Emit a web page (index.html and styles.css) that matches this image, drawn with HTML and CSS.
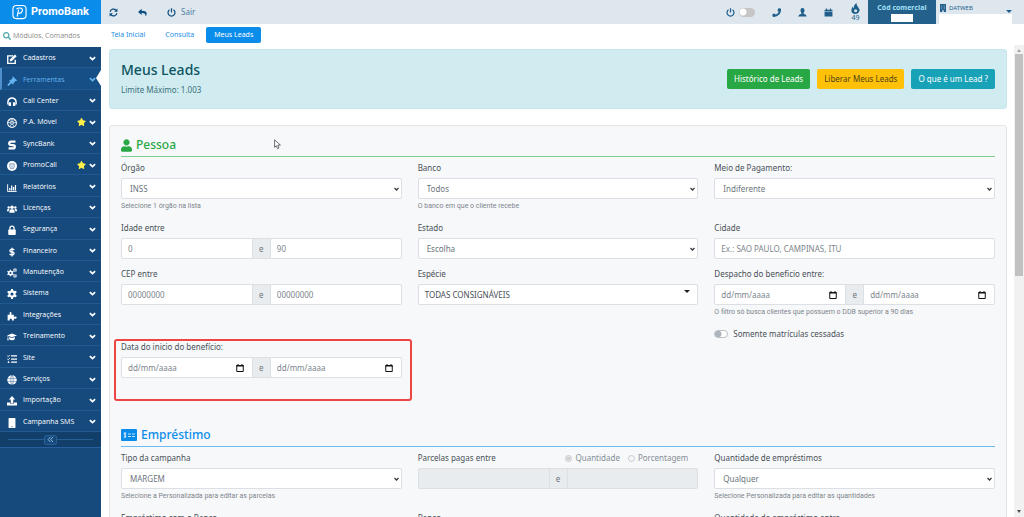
FILE: index.html
```html
<!DOCTYPE html>
<html lang="pt-BR">
<head>
<meta charset="utf-8">
<title>PromoBank - Meus Leads</title>
<link rel="stylesheet" href="styles.css">
</head>
<body>
<svg class="defs" aria-hidden="true">
  <symbol id="user" viewBox="0 0 448 512"><path d="M224 256c70.7 0 128-57.3 128-128S294.7 0 224 0 96 57.3 96 128s57.3 128 128 128zm89.6 32h-16.7c-22.2 10.2-46.9 16-72.9 16s-50.6-5.8-72.9-16h-16.7C60.2 288 0 348.2 0 422.4V464c0 26.500 21.500 48 48 48h352c26.500 0 48-21.500 48-48v-41.600c0-74.200-60.200-134.400-134.400-134.400z"/></symbol>
  <symbol id="search" viewBox="0 0 512 512"><path d="M505 442.700L405.300 343c-4.500-4.500-10.600-7-17-7H372c27.600-35.300 44-79.700 44-128C416 93.100 322.900 0 208 0S0 93.100 0 208s93.100 208 208 208c48.300 0 92.700-16.400 128-44v16.300c0 6.400 2.500 12.500 7 17l99.700 99.700c9.400 9.400 24.600 9.400 33.900 0l28.300-28.300c9.400-9.400 9.400-24.600.1-34zM208 336c-70.700 0-128-57.200-128-128 0-70.700 57.200-128 128-128 70.700 0 128 57.200 128 128 0 70.700-57.200 128-128 128z"/></symbol>
  <symbol id="star" viewBox="0 0 576 512"><path d="M259.300 17.800L194 150.200 47.900 171.500c-26.200 3.800-36.700 36.100-17.700 54.600l105.700 103-25 145.500c-4.500 26.300 23.200 46 46.400 33.700L288 439.600l130.700 68.700c23.200 12.200 50.900-7.400 46.400-33.700l-25-145.500 105.700-103c19-18.500 8.500-50.800-17.700-54.600L382 150.200 316.700 17.800c-11.700-23.600-45.600-23.900-57.400 0z"/></symbol>
  <symbol id="chevron" viewBox="0 0 16 16"><path d="M2 5l6 5.500L14 5" fill="none" stroke="currentColor" stroke-width="4"/></symbol>
  <symbol id="edit" viewBox="0 0 16 16"><path d="M10 3H1.200v12h12V9" fill="none" stroke="currentColor" stroke-width="2.200"/><path d="M5 8.500L12.800.7l2.700 2.700L7.700 11.200 4.600 12z"/></symbol>
  <symbol id="gavel" viewBox="0 0 16 16"><path d="M8.500 1l6.500 6.500-1.500 1.500-1-.4-3 3 .4 1L8.400 14 2.500 8l1.400-1.500 1 .4 3-3-.4-1.300z" transform="translate(1 -.5)"/><path d="M7 9.500L1.500 15" stroke="currentColor" stroke-width="3"/></symbol>
  <symbol id="headset" viewBox="0 0 16 16"><path d="M1.500 12V8a6.500 6.500 0 0 1 13 0v4" fill="none" stroke="currentColor" stroke-width="2.400"/><path d="M3.500 8.500h3v6h-2L2 13zM12.500 8.500h-3v6h2L14 13z"/></symbol>
  <symbol id="ball" viewBox="0 0 16 16"><circle cx="8" cy="8" r="7" fill="none" stroke="currentColor" stroke-width="1.700"/><circle cx="8" cy="8" r="2.200" fill="none" stroke="currentColor" stroke-width="1.300"/><path d="M8 1v5M15 7l-5 1M12 14L9 10M4 14l3-4M1 7l5 1M3.500 3L7 6.500M12.500 3L9 6.500" stroke="currentColor" stroke-width="1.200"/></symbol>
  <symbol id="sync" viewBox="0 0 16 16"><path d="M13.500 2.500H6.500Q3.500 2.500 3.500 5.200T6.500 8h3Q12.500 8 12.500 10.800T9.500 13.500H2.500" fill="none" stroke="currentColor" stroke-width="3.600"/></symbol>
  <symbol id="face" viewBox="0 0 16 16"><circle cx="8" cy="8" r="8"/><path d="M4.500 4.500h7v4.500a3.500 3.500 0 0 1-7 0zM6 6.500h1.300M8.800 6.500h1.300M6.500 9q1.500 1.800 3 0" fill="none" stroke="#164a7d" stroke-width=".8"/></symbol>
  <symbol id="chart" viewBox="0 0 16 16"><path d="M1 2v11.500h14.500" fill="none" stroke="currentColor" stroke-width="1.500"/><path d="M4.500 12V8M7.500 12V4M10.500 12V6.500M13.500 12V3" stroke="currentColor" stroke-width="2"/></symbol>
  <symbol id="group" viewBox="0 0 16 16"><circle cx="8" cy="5.200" r="2.800"/><circle cx="2.700" cy="5.500" r="1.900"/><circle cx="13.300" cy="5.500" r="1.900"/><path d="M3.800 14v-2.500q0-3 3-3h2.400q3 0 3 3V14zM0 11.500V9.800Q0 8 2 8h1.800Q2.900 9.500 2.900 11.500zM16 11.500V9.800Q16 8 14 8h-1.800q.9 1.500.9 3.500z"/></symbol>
  <symbol id="lock" viewBox="0 0 16 16"><rect x="2" y="7" width="12" height="9" rx="1.200"/><path d="M4.700 8V5a3.300 3.300 0 0 1 6.600 0v3" fill="none" stroke="currentColor" stroke-width="2"/></symbol>
  <symbol id="dollar" viewBox="0 0 16 16"><path d="M11.500 5Q11 3.500 8 3.500T4.700 5.700 8 8t3.300 2.400T8 12.600 4.300 11M8 1v14" fill="none" stroke="currentColor" stroke-width="2.100"/></symbol>
  <symbol id="gear" viewBox="0 0 16 16"><circle cx="8" cy="8" r="4.200" fill="none" stroke="currentColor" stroke-width="3.400"/><path d="M8 0v3M8 13v3M1 4l2.700 1.500M12.300 10.500L15 12M1 12l2.700-1.500M12.300 5.500L15 4" stroke="currentColor" stroke-width="3.200"/></symbol>
  <symbol id="gears" viewBox="0 0 16 16"><use href="#gear" x="0" y="2.500" width="11" height="11"/><use href="#gear" x="9.500" y="0" width="6.500" height="7"/><use href="#gear" x="9.500" y="9" width="6.500" height="7"/></symbol>
  <symbol id="puzzle" viewBox="0 0 16 16"><path d="M1 6h3.500Q3 2 5.500 1.500T7 6h4v3.500q4-1.500 4.500 1T11 12v3H8q0-3-2-3t-2 3H1z"/></symbol>
  <symbol id="grad" viewBox="0 0 16 16"><path d="M8 2.500l8 3-8 3-8-3z"/><path d="M3.500 8L8 9.700 12.500 8v3.500Q8 14.500 3.500 11.500zM1 6h1v3.500l.8 3.500H.3L1 9.500z"/></symbol>
  <symbol id="tasks" viewBox="0 0 16 16"><path d="M6.500 3H16M6.500 8H16M6.500 13H16" stroke="currentColor" stroke-width="2"/><path d="M.5 3l1.500 1.300L4.500 1.500M.5 8L2 9.300 4.500 6.500" fill="none" stroke="currentColor" stroke-width="1.400"/><circle cx="2.500" cy="13" r="1.400"/></symbol>
  <symbol id="globe" viewBox="0 0 16 16"><circle cx="8" cy="8" r="7.600"/><path d="M0 5.500h16M0 10.500h16M8 0v16M8 0q-6 8 0 16M8 0q6 8 0 16" fill="none" stroke="#164a7d" stroke-width=".6"/></symbol>
  <symbol id="upload" viewBox="0 0 16 16"><path d="M8 0l5 5.500h-3V11H6V5.500H3z"/><path d="M0 10.500h4.800V12h6.400v-1.500H16V15H0z"/></symbol>
  <symbol id="mobile" viewBox="0 0 16 16"><path d="M3.500 0h9q1 0 1 1v14q0 1-1 1h-9q-1 0-1-1V1q0-1 1-1z"/><path d="M7 14h2" stroke="#164a7d" stroke-width="1.200"/></symbol>
  <symbol id="refresh" viewBox="0 0 16 16"><path d="M2 7a6 6 0 0 1 10.500-3M14 9a6 6 0 0 1-10.500 3" fill="none" stroke="currentColor" stroke-width="2.200"/><path d="M15 .8v6H9zM1 15.200v-6h6z"/></symbol>
  <symbol id="reply" viewBox="0 0 16 16"><path d="M6.500 1.500V5Q16 5 15.500 10.500q-.2 2.500-2.500 4.200Q14.500 8.800 6.500 9v3.500L0 7z"/></symbol>
  <symbol id="power" viewBox="0 0 16 16"><path d="M4.500 3a6.200 6.200 0 1 0 7 0M8 .5V8" fill="none" stroke="currentColor" stroke-width="2.200"/></symbol>
  <symbol id="phone" viewBox="0 0 16 16"><path d="M12.200.3l3 .7q.8.200.8 1A13 13 0 0 1 2.500 16q-1 0-1.200-.8L.5 12.300q-.1-.7.500-1l3.200-1.400q.6-.2 1 .3L6.600 12A10 10 0 0 0 12 6.600L10.200 5.200q-.5-.4-.3-1L11.200.8q.3-.6 1-.5z"/></symbol>
  <symbol id="person" viewBox="0 0 16 16"><path d="M8 0q3.600 0 3.600 4 0 3-1.700 4.700v1.500q5.300 1.300 5.600 4.800H.5Q.8 11.500 6.100 10.200V8.700Q4.400 7 4.400 4 4.400 0 8 0z"/></symbol>
  <symbol id="calendar" viewBox="0 0 16 16"><path d="M1 3h2.500V1h2v2h5V1h2v2H15v2.300H1zM1 6.300h14V15H1z"/></symbol>
  <symbol id="flame" viewBox="0 0 16 16"><path d="M9.500 0Q9 3 12 6.200T13 13q-1.500 3-5 3-6 0-6-5.500Q2 7.500 4.200 5q.3 2.200 1.500 2.700Q5 2.500 9.500 0z"/><circle cx="8.200" cy="11.300" r="2.200" fill="#dee7ee"/></symbol>
  <symbol id="building" viewBox="0 0 16 16"><path d="M2 0h12v16H9.500v-3.500h-3V16H2z"/><path d="M4.500 3.500h2M9.500 3.500h2M4.500 6.500h2M9.500 6.500h2M4.500 9.500h2M9.500 9.500h2" stroke="#dee7ee" stroke-width="1.200"/></symbol>
  <symbol id="date" viewBox="0 0 16 16"><path d="M1.500 3h13v12h-13z" fill="none" stroke="currentColor" stroke-width="2"/><path d="M1 2h14v3H1zM3 0h2v3H3zM11 0h2v3h-2z"/></symbol>
</svg>

<div class="app">
  <aside class="sidebar">
    <a class="brand" href="#"><svg class="brand-mark" viewBox="0 0 16 16"><rect x="1" y="1" width="14" height="14" rx="3.500"/><path d="M5.500 13L7 5.500M4.800 5Q6 3.500 8.500 3.700 11.500 4 11 6.800 10.300 9.700 7 9.500"/></svg>PromoBank</a>
    <label class="finder"><svg><use href="#search"/></svg><input type="text" placeholder="Módulos, Comandos" aria-label="Módulos, Comandos"></label>
    <nav class="menu">
      <a href="#"><svg class="ico"><use href="#edit"/></svg><span>Cadastros</span><svg class="chev"><use href="#chevron"/></svg></a>
      <a href="#" class="current"><svg class="ico"><use href="#gavel"/></svg><span>Ferramentas</span><svg class="chev"><use href="#chevron"/></svg></a>
      <a href="#"><svg class="ico"><use href="#headset"/></svg><span>Call Center</span><svg class="chev"><use href="#chevron"/></svg></a>
      <a href="#"><svg class="ico"><use href="#ball"/></svg><span>P.A. Móvel</span><svg class="star"><use href="#star"/></svg><svg class="chev"><use href="#chevron"/></svg></a>
      <a href="#"><svg class="ico"><use href="#sync"/></svg><span>SyncBank</span><svg class="chev"><use href="#chevron"/></svg></a>
      <a href="#"><svg class="ico"><use href="#face"/></svg><span>PromoCall</span><svg class="star"><use href="#star"/></svg><svg class="chev"><use href="#chevron"/></svg></a>
      <a href="#"><svg class="ico"><use href="#chart"/></svg><span>Relatórios</span><svg class="chev"><use href="#chevron"/></svg></a>
      <a href="#"><svg class="ico"><use href="#group"/></svg><span>Licenças</span><svg class="chev"><use href="#chevron"/></svg></a>
      <a href="#"><svg class="ico"><use href="#lock"/></svg><span>Segurança</span><svg class="chev"><use href="#chevron"/></svg></a>
      <a href="#"><svg class="ico"><use href="#dollar"/></svg><span>Financeiro</span><svg class="chev"><use href="#chevron"/></svg></a>
      <a href="#"><svg class="ico"><use href="#gears"/></svg><span>Manutenção</span><svg class="chev"><use href="#chevron"/></svg></a>
      <a href="#"><svg class="ico"><use href="#gear"/></svg><span>Sistema</span><svg class="chev"><use href="#chevron"/></svg></a>
      <a href="#"><svg class="ico"><use href="#puzzle"/></svg><span>Integrações</span><svg class="chev"><use href="#chevron"/></svg></a>
      <a href="#"><svg class="ico"><use href="#grad"/></svg><span>Treinamento</span><svg class="chev"><use href="#chevron"/></svg></a>
      <a href="#"><svg class="ico"><use href="#tasks"/></svg><span>Site</span><svg class="chev"><use href="#chevron"/></svg></a>
      <a href="#"><svg class="ico"><use href="#globe"/></svg><span>Serviços</span><svg class="chev"><use href="#chevron"/></svg></a>
      <a href="#"><svg class="ico"><use href="#upload"/></svg><span>Importação</span><svg class="chev"><use href="#chevron"/></svg></a>
      <a href="#"><svg class="ico"><use href="#mobile"/></svg><span>Campanha SMS</span><svg class="chev"><use href="#chevron"/></svg></a>
    </nav>
    <div class="collapse"><button type="button" aria-label="Recolher menu"><svg viewBox="0 0 16 16"><path d="M8 2L2.500 8 8 14M14 2L8.500 8l5.500 6"/></svg></button></div>
  </aside>

  <div class="main">
    <header class="topbar">
      <div class="actions">
        <button type="button" aria-label="Atualizar"><svg><use href="#refresh"/></svg></button>
        <button type="button" aria-label="Voltar"><svg><use href="#reply"/></svg></button>
        <button type="button"><svg><use href="#power"/></svg><span>Sair</span></button>
      </div>
      <div class="tools">
        <label class="presence"><svg><use href="#power"/></svg><input class="toggle" type="checkbox" aria-label="Disponível"></label>
        <button type="button" aria-label="Telefone"><svg><use href="#phone"/></svg></button>
        <button type="button" aria-label="Perfil"><svg><use href="#person"/></svg></button>
        <button type="button" aria-label="Agenda"><svg><use href="#calendar"/></svg></button>
        <button type="button" class="leads"><svg><use href="#flame"/></svg>49</button>
      </div>
      <div class="code">Cód comercial<span></span></div>
      <button type="button" class="account"><span class="company"><svg><use href="#building"/></svg>DATWEB</span><span class="mask"></span><span class="caret"></span></button>
    </header>
    <nav class="tabs">
      <a href="#">Tela Inicial</a><a href="#">Consulta</a><a href="#" class="active">Meus Leads</a>
    </nav>

    <div class="viewport">
      <main class="page">
        <section class="banner">
          <div><h1>Meus Leads</h1><p>Limite Máximo: 1.003</p></div>
          <div class="buttons">
            <button type="button" class="green">Histórico de Leads</button>
            <button type="button" class="yellow">Liberar Meus Leads</button>
            <button type="button" class="teal">O que é um Lead ?</button>
          </div>
        </section>

        <form class="card">
          <h2 class="person"><svg><use href="#user"/></svg>Pessoa</h2>
          <div class="row">
            <div class="field"><label for="orgao">Órgão</label><select id="orgao"><option>INSS</option></select><small>Selecione 1 órgão na lista</small></div>
            <div class="field"><label for="banco">Banco</label><select id="banco"><option>Todos</option></select><small>O banco em que o cliente recebe</small></div>
            <div class="field"><label for="meio">Meio de Pagamento:</label><select id="meio"><option>Indiferente</option></select></div>
          </div>
          <div class="row">
            <div class="field"><label for="idade">Idade entre</label><div class="range"><input id="idade" type="text" placeholder="0"><span>e</span><input type="text" placeholder="90" aria-label="Idade final"></div></div>
            <div class="field"><label for="estado">Estado</label><select id="estado"><option>Escolha</option></select></div>
            <div class="field"><label for="cidade">Cidade</label><input id="cidade" type="text" placeholder="Ex.: SAO PAULO, CAMPINAS, ITU"></div>
          </div>
          <div class="row tight">
            <div class="field"><label for="cep">CEP entre</label><div class="range"><input id="cep" type="text" placeholder="00000000"><span>e</span><input type="text" placeholder="00000000" aria-label="CEP final"></div></div>
            <div class="field"><label for="especie">Espécie</label><button id="especie" type="button" class="picker">TODAS CONSIGNÁVEIS<span class="caret"></span></button></div>
            <div class="field"><label for="ddb">Despacho do beneficio entre:</label><div class="range"><div class="date"><input id="ddb" type="text" placeholder="dd/mm/aaaa"><svg><use href="#date"/></svg></div><span>e</span><div class="date"><input type="text" placeholder="dd/mm/aaaa" aria-label="Despacho final"><svg><use href="#date"/></svg></div></div><small>O filtro só busca clientes que possuem o DDB superior a 90 dias</small>
              <label class="switch"><input class="toggle" type="checkbox">Somente matrículas cessadas</label></div>
          </div>
          <div class="row">
            <div class="field marked"><label for="dib">Data do inicio do benefício:</label><div class="range"><div class="date"><input id="dib" type="text" placeholder="dd/mm/aaaa"><svg><use href="#date"/></svg></div><span>e</span><div class="date"><input type="text" placeholder="dd/mm/aaaa" aria-label="Data final"><svg><use href="#date"/></svg></div></div></div>
          </div>

          <h2 class="loan"><svg viewBox="0 0 32 24"><rect width="32" height="24" rx="2" fill="currentColor"/><path d="M10.500 9Q7 7 6 9t2 3 1.500 3.500-4 .5M8 6v12M14 10h6M22 10h6M14 15h6M22 15h6" fill="none" stroke="#fff" stroke-width="1.500"/></svg>Empréstimo</h2>
          <div class="row">
            <div class="field"><label for="tipo">Tipo da campanha</label><select id="tipo"><option>MARGEM</option></select><small>Selecione a Personalizada para editar as parcelas</small></div>
            <div class="field"><div class="label-line"><label for="parc">Parcelas pagas entre</label><div class="radios"><label><input type="radio" name="modo" checked disabled>Quantidade</label><label><input type="radio" name="modo" disabled>Porcentagem</label></div></div><div class="range off"><input id="parc" type="text" disabled><span>e</span><input type="text" disabled aria-label="Parcelas final"></div></div>
            <div class="field"><label for="qtd">Quantidade de empréstimos</label><select id="qtd"><option>Qualquer</option></select><small>Selecione Personalizada para editar as quantidades</small></div>
          </div>
          <div class="row">
            <div class="field"><label for="com">Empréstimo com o Banco</label><select id="com"><option>Qualquer</option></select></div>
            <div class="field"><label for="bancos">Banco</label><select id="bancos"><option>Todos</option></select></div>
            <div class="field"><label for="entre">Quantidade de empréstimo entre</label><input id="entre" type="text"></div>
          </div>
        </form>
      </main>
      <div class="scrollbar" aria-hidden="true"><i class="up"></i><b></b><i class="down"></i></div>
    </div>
  </div>
</div>
<svg class="pointer" viewBox="0 0 12 18" aria-hidden="true"><path d="M1 1v13l3-3 2 5 2.500-1-2-5H11z" fill="#fff" stroke="#333" stroke-width="1.200"/></svg>
</body>
</html>
```
FILE: styles.css
```css
* { box-sizing: border-box; }
body { margin: 0; font: 8px/12px "Noto Sans", "Open Sans", sans-serif; color: #495057; background: #fff; }
button, input, select { font: inherit; color: inherit; }
button { border: 0; padding: 0; background: none; }
a { text-decoration: none; }
svg { fill: currentColor; flex: none; }
.defs { position: absolute; width: 0; height: 0; }
.app { display: flex; height: 100vh; overflow: hidden; }

.sidebar { width: 101px; flex: none; background: #164a7d; font-family: "Open Sans", sans-serif; }
.brand { display: flex; align-items: center; gap: 4px; height: 24px; padding-left: 12px; background: #0a8ceb; color: #fff; font: bold 11px/24px Roboto, sans-serif; }
.brand-mark { width: 15px; height: 16px; fill: none; stroke: #fff; stroke-width: 1.2; }
.finder { display: flex; align-items: center; gap: 2px; height: 23px; padding-left: 3px; background: #fff; color: #4ba6a8; }
.finder svg { width: 8px; height: 8px; }
.finder input { flex: 1; min-width: 0; border: 0; padding: 0; outline: 0; font-size: 7px; }
.finder input::placeholder { color: #8a8a8a; opacity: 1; }
.menu { display: flex; flex-direction: column; height: 385px; }
.menu a { flex: 1; display: flex; align-items: center; padding: 2px 5px 0 7px; border-bottom: 1px solid #205a91; color: #fff; font-size: 7px; position: relative; }
.menu span { flex: 1; white-space: nowrap; }
.menu .ico { width: 10px; height: 10px; margin-right: 6px; margin-top: 2px; }
.menu .chev { width: 7px; height: 7px; }
.menu .star { width: 9px; height: 8px; margin-right: 3px; color: #fff04a; }
.menu .current { color: #65b3ee; background: #164f86; border-left: 2px solid #4f8fcb; padding-left: 5px; }
.menu .current::after { content: ""; position: absolute; right: 0; top: 2px; border: 8px solid transparent; border-right: 5px solid #fff; border-left: 0; }
.collapse { height: 16px; display: flex; align-items: center; justify-content: center; background: linear-gradient(#265f95, #265f95) center / 85px 1px no-repeat #123f69; border-bottom: 1px solid #2660a0; }
.collapse button { width: 13px; height: 10px; display: grid; place-items: center; background: #164a7d; border: 1px solid #265f95; border-radius: 2px; color: #9fc4e4; }
.collapse svg { width: 7px; height: 7px; fill: none; stroke: currentColor; stroke-width: 2; }

.main { flex: 1; min-width: 0; display: flex; flex-direction: column; }
.topbar { display: flex; height: 24px; flex: none; background: #dee7ee; color: #205f8c; }
.topbar svg { width: 9px; height: 9px; }
.actions, .tools { display: flex; align-items: center; }
.actions { flex: 1; gap: 20px; padding-left: 8px; color: #0e4d80; }
.actions button { display: flex; align-items: center; gap: 5px; color: #0e4d80; }
.actions span { color: #4f7d9f; }
.tools { gap: 17px; padding-right: 7px; }
.tools button { display: flex; }
.presence { display: flex; align-items: center; gap: 4px; }
.tools .leads { flex-direction: column; align-items: center; font-size: 7px; line-height: 8px; color: #205f8c; }
.tools .leads svg { width: 11px; height: 11px; }
.toggle { appearance: none; width: 16px; height: 9px; margin: 0; border-radius: 5px; background: radial-gradient(circle at 4px 4px, #fff 3px, transparent 4px) #c6c6c6; }
.code { width: 68px; padding-top: 1px; background: #23618a; color: #a5e1f7; font: bold 7px/13px "Open Sans", sans-serif; text-align: center; }
.code span { display: block; width: 22px; height: 8px; margin: 0 auto; background: #fff; }
.account { width: 88px; padding: 1px 12px 0 3px; position: relative; font-size: 6px; text-align: left; }
.company { display: flex; align-items: center; gap: 2px; height: 12px; }
.company svg { width: 8px; height: 8px; }
.mask { display: block; height: 10px; background: #fff; }
.caret { border: 3px solid transparent; border-top-color: currentColor; border-bottom: 0; }
.account .caret { position: absolute; right: 12px; top: 10px; }

.tabs { display: flex; align-items: center; gap: 12px; height: 21px; flex: none; padding-left: 10px; font-size: 7px; }
.tabs a { color: #1b8fe8; line-height: 16px; }
.tabs a + a { margin-left: 8px; }
.tabs .active { margin-left: 0; padding: 0 8px; border-radius: 2px; background: #0a8ceb; color: #fff; }

.viewport { flex: 1; min-height: 0; display: flex; }
.page { flex: 1; min-width: 0; padding: 4px 7px 0 8px; overflow: hidden; }
.scrollbar { width: 10px; display: flex; flex-direction: column; align-items: center; background: #f1f1f1; padding: 4px 0; }
.scrollbar b { width: 8px; height: 222px; margin-top: 2px; background: #c1c1c1; }
.scrollbar i { border: 2px solid transparent; }
.scrollbar .up { border-top: 0; border-bottom: 3px solid #a3a3a3; }
.scrollbar .down { margin-top: auto; border-bottom: 0; border-top: 3px solid #505050; }

.banner { display: flex; justify-content: space-between; align-items: center; height: 60px; padding: 0 11px; border: 1px solid #c6e6ec; border-radius: 3px; background: #d1ecf1; color: #0c5460; }
.banner h1 { margin: 0 0 6px; font-size: 14px; line-height: 16px; font-weight: 500; }
.banner p { margin: 0 0 1px; color: #3a7079; }
.buttons { display: flex; gap: 7px; }
.buttons button { height: 20px; padding: 0 7px; border-radius: 2px; color: #fff; }
.green { background: #28a745; }
.buttons .yellow { background: #ffc107; color: #4d4318; }
.teal { background: #17a2b8; }

.card { margin-top: 16px; padding: 11px 11px 0 11px; border: 1px solid #e2e5e8; border-radius: 3px; background: #f7f8fa; }
.card h2 { display: flex; align-items: center; gap: 4px; margin: 0 0 5px; padding-bottom: 3px; border-bottom: 1px solid; font-size: 12px; line-height: 16px; font-weight: 500; }
.card .person { color: #28a745; border-color: #80cd90; }
.card .loan { margin-top: 49px; color: #0a8ceb; border-color: #6cbbf0; }
.person svg { width: 11px; height: 13px; }
.loan svg { width: 16px; height: 12px; }
.row { display: grid; grid-template-columns: repeat(3, minmax(0, 1fr)); gap: 16px; margin-bottom: 9px; }
.card .tight { margin-bottom: 1px; }
.field > label, .label-line { display: block; height: 12px; margin-bottom: 4px; }
.field > input, .field > select, .range, .picker { width: 100%; height: 21px; border: 1px solid #dcdfe3; border-radius: 2px; background: #fff; color: #6c757d; }
.field > select { display: block; appearance: none; padding: 0 8px; background: #fff url("data:image/svg+xml,%3Csvg xmlns='http://www.w3.org/2000/svg' viewBox='0 0 10 8'%3E%3Cpath d='M1 2l4 4 4-4' fill='none' stroke='%23343a40' stroke-width='2.6'/%3E%3C/svg%3E") right 2px center / 5px 4px no-repeat; }
.field > input { display: block; padding: 0 6px; }
.field small { display: block; margin-top: 1px; font: 7px/13px Roboto, sans-serif; color: #7d858c; }
input::placeholder { color: #7d858c; opacity: 1; }
.range { display: flex; }
.range input { flex: 1; min-width: 0; border: 0; padding: 0 6px; background: none; outline: 0; }
.range > span { width: 19px; display: grid; place-items: center; background: #e9ecef; border: solid #dcdfe3; border-width: 0 1px; }
.date { flex: 1; min-width: 0; display: flex; align-items: center; padding-right: 8px; }
.date svg { width: 8px; height: 8px; color: #111; }
.range.off { background: #e9ecef; }
.picker { display: flex; justify-content: space-between; padding: 0 7px 0 6px; line-height: 19px; color: #495057; }
.picker .caret { margin-top: 5px; color: #222; }
.field > .switch { display: flex; align-items: center; gap: 5px; margin: 9px 0 0; }
.switch .toggle { width: 14px; height: 8px; border: 1px solid #b9c0c7; background: radial-gradient(circle at 3px 3px, #adb5bd 3px, transparent 4px) #fff; }
.label-line, .radios, .radios label { display: flex; align-items: center; justify-content: space-between; }
.radios { gap: 8px; padding-right: 10px; color: #868e96; }
.radios label { gap: 3px; }
.radios input { width: 7px; height: 7px; margin: 0; }
.marked { position: relative; }
.marked::after { content: ""; position: absolute; inset: -2px -10px -23px -7px; border: 2px solid #ed4444; border-radius: 3px; pointer-events: none; }
.pointer { position: absolute; left: 274px; top: 139px; width: 7px; height: 11px; }
```
